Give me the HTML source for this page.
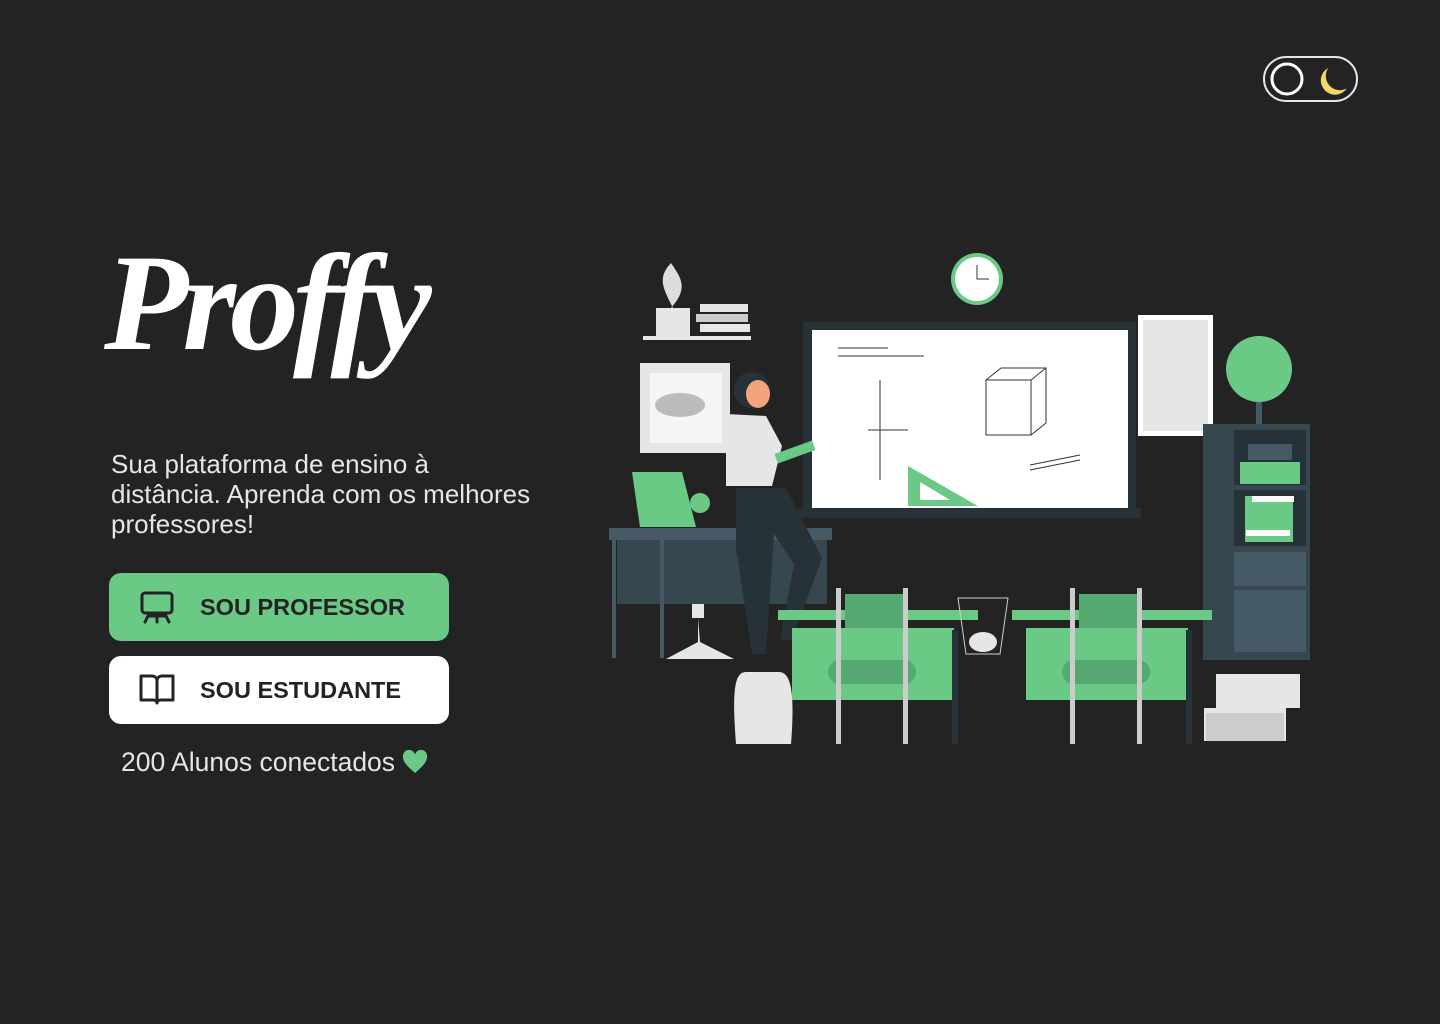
<!DOCTYPE html>
<html><head><meta charset="utf-8"><style>
*{margin:0;padding:0;box-sizing:border-box}
body{width:1440px;height:1024px;background:#232323;position:relative;overflow:hidden;font-family:"Liberation Sans",Roboto,sans-serif}
.logo{position:absolute;left:104px;top:234px;font-family:"Liberation Serif",serif;font-style:italic;font-weight:bold;font-size:138px;color:#fff;letter-spacing:-6px;line-height:1}
.desc{position:absolute;left:111px;top:449px;width:430px;font-size:26px;line-height:30px;color:#e6e6e6}
.btn{position:absolute;left:109px;width:340px;height:68px;border-radius:12px;display:flex;align-items:center;font-weight:bold;font-size:23.5px;color:#232323}
.btn svg{position:absolute;left:30px}
.btn span{position:absolute;left:200px;left:91px}
.g{top:573px;background:#6bc986}
.w{top:656px;background:#fff}
.cnt{position:absolute;left:121px;top:747px;font-size:26.5px;color:#e6e6e6}
.tog{position:absolute;left:1263px;top:56px;width:95px;height:46px;border:2px solid #e6e6e6;border-radius:23px}
</style></head><body>
<div class="logo">Proffy</div>
<div class="desc">Sua plataforma de ensino à distância. Aprenda com os melhores professores!</div>
<div class="btn g"><svg width="36" height="34" viewBox="0 0 36 34" fill="none" stroke="#232323" stroke-width="3" stroke-linecap="round"><rect x="3" y="3" width="30" height="20" rx="3"/><path d="M10 24l-4 8M18 24v8M26 24l4 8M9 26h18"/></svg><span>SOU PROFESSOR</span></div>
<div class="btn w"><svg width="36" height="34" viewBox="0 0 36 34" fill="none" stroke="#232323" stroke-width="3" stroke-linejoin="round"><path d="M2 3h11c3 0 5 2 5 5v22c0-2-2-3-4-3H2zM34 3H23c-3 0-5 2-5 5v22c0-2 2-3 4-3h12z"/></svg><span>SOU ESTUDANTE</span></div>
<div class="cnt">200 Alunos conectados <svg width="26" height="24" viewBox="0 0 26 24" style="vertical-align:-3px"><path d="M13 23C5 16 1 12 1 7a6 6 0 0 1 12-2 6 6 0 0 1 12 2c0 5-4 9-12 16z" fill="#6bc986"/></svg></div>
<div class="tog"><svg width="95" height="46" viewBox="-2 -2 95 46" style="position:absolute;left:-2px;top:-2px"><circle cx="22" cy="21" r="15" fill="none" stroke="#fff" stroke-width="3"/><path d="M66 8a15 15 0 1 0 18 20a12 12 0 0 1-18-20z" fill="#f5d56e" stroke="#232323" stroke-width="1.5"/><circle cx="70" cy="21" r="1.5" fill="#232323"/><circle cx="71" cy="27" r="1.5" fill="#232323"/></svg></div>
<svg style="position:absolute;left:600px;top:250px" width="720" height="500" viewBox="600 250 720 500">
<rect x="643" y="336" width="108" height="4" fill="#e6e6e6"/><rect x="656" y="308" width="34" height="28" fill="#e6e6e6"/><path d="M673 308c-10-20-16-30-2-45 10 15 18 25 0 45" fill="#ddd"/>
<rect x="700" y="304" width="48" height="8" fill="#e6e6e6"/><rect x="696" y="314" width="52" height="8" fill="#ccc"/><rect x="700" y="324" width="50" height="8" fill="#e6e6e6"/>
<rect x="640" y="363" width="90" height="90" fill="#e6e6e6"/><rect x="650" y="373" width="72" height="70" fill="#f5f5f5"/><ellipse cx="680" cy="405" rx="25" ry="12" fill="#bbb"/>
<circle cx="977" cy="279" r="26" fill="#6bc986"/><circle cx="977" cy="279" r="22" fill="#fff"/><path d="M977 265v14h12" stroke="#333" fill="none"/>
<rect x="803" y="322" width="333" height="188" fill="#263238"/><rect x="812" y="330" width="316" height="178" fill="#fff"/><rect x="797" y="508" width="344" height="10" fill="#263238"/>
<path d="M908 466v40h70z" fill="#6bc986"/><path d="M920 482v18h30z" fill="#fff"/>
<g stroke="#333" fill="none" stroke-width="1"><path d="M986 380h45v55h-45zM986 380l15-12h45v55l-15 12M1046 368l-15 12"/><path d="M880 380v100M868 430h40M838 348h50M838 356h86M1030 465l50-10M1030 470l50-10"/></g>
<rect x="1138" y="315" width="75" height="121" fill="#fff"/><rect x="1143" y="320" width="65" height="111" fill="#e6e6e6"/>
<circle cx="1259" cy="369" r="33" fill="#6bc986"/><rect x="1256" y="402" width="6" height="22" fill="#455a64"/>
<rect x="1203" y="424" width="107" height="236" fill="#37474f"/><rect x="1234" y="430" width="72" height="55" fill="#263238"/><rect x="1234" y="490" width="72" height="56" fill="#263238"/><rect x="1234" y="552" width="72" height="34" fill="#455a64"/><rect x="1234" y="590" width="72" height="62" fill="#455a64"/>
<rect x="1240" y="462" width="60" height="22" fill="#6bc986"/><rect x="1248" y="444" width="44" height="16" fill="#455a64"/>
<rect x="1245" y="496" width="48" height="46" fill="#6bc986"/><rect x="1252" y="496" width="42" height="6" fill="#fff"/><rect x="1246" y="530" width="44" height="6" fill="#fff"/>
<rect x="609" y="528" width="223" height="12" fill="#455a64"/><rect x="617" y="540" width="210" height="64" fill="#37474f"/><rect x="612" y="540" width="4" height="118" fill="#455a64"/><rect x="660" y="540" width="4" height="118" fill="#455a64"/>
<path d="M632 472h50l14 55h-56z" fill="#6bc986"/><circle cx="700" cy="503" r="10" fill="#6bc986"/>
<rect x="692" y="604" width="12" height="14" fill="#e6e6e6"/><path d="M698 618v24l-32 17h68l-34-17" fill="#e6e6e6"/>
<path d="M736 488h50l36 70-30 82h-12l14-76-20-30-8 120h-14l-16-106z" fill="#263238"/>
<path d="M726 414l40 2 16 30-10 40h-46z" fill="#e6e6e6"/><circle cx="752" cy="390" r="18" fill="#263238"/><ellipse cx="758" cy="394" rx="12" ry="14" fill="#f4a47c"/>
<rect x="775" y="447" width="40" height="10" fill="#6bc986" transform="rotate(-20 795 452)"/>
<path d="M746 672c-12 0-14 20-10 72h55c4-52 0-72-12-72z" fill="#e6e6e6"/>
<g id="d"><rect x="778" y="610" width="200" height="10" fill="#6bc986"/><rect x="845" y="594" width="60" height="36" fill="#55a86f"/><rect x="792" y="628" width="162" height="72" fill="#6bc986"/><rect x="828" y="660" width="88" height="24" rx="12" fill="#55a86f"/><rect x="836" y="588" width="5" height="156" fill="#ccc"/><rect x="903" y="588" width="5" height="156" fill="#ccc"/><rect x="952" y="630" width="6" height="114" fill="#263238"/></g>
<use href="#d" x="234"/>
<path d="M958 598h50l-8 56h-34z" fill="none" stroke="#ccc"/><ellipse cx="983" cy="642" rx="14" ry="10" fill="#e6e6e6"/>
<rect x="1216" y="674" width="84" height="34" fill="#e6e6e6"/><rect x="1204" y="708" width="82" height="33" fill="#e6e6e6"/><rect x="1206" y="713" width="78" height="28" fill="#ccc"/>
</svg>
</body></html>
